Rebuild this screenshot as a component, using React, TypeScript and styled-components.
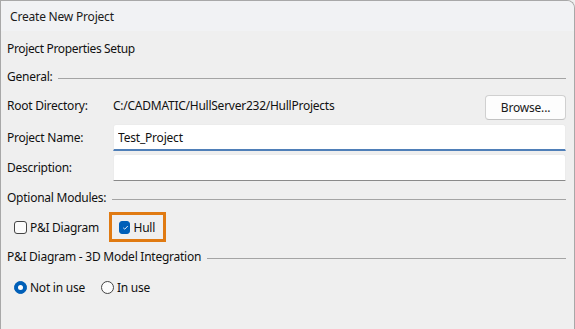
import { FunctionComponent } from "react";
import styled, { createGlobalStyle } from "styled-components";

const GlobalStyle = createGlobalStyle`
  html, body {
    margin: 0;
    padding: 0;
    background: #efefef;
  }
  body {
    font-family: "Noto Sans", "Segoe UI", sans-serif;
    font-size: 12px;
    color: #111;
  }
`;

const Window = styled.div`
  box-sizing: border-box;
  width: 575px;
  height: 329px;
  border: 1px solid #a8a8a8;
  border-bottom: none;
  border-top-right-radius: 8px;
  background: #efefef;
  overflow: hidden;
`;

const TitleBar = styled.div`
  height: 30px;
  display: flex;
  align-items: center;
  padding-left: 9px;
  background: #f1f2f4;
  color: #1b1b1b;
  letter-spacing: -0.2px;
`;

const Body = styled.div`
  display: flex;
  flex-direction: column;
  padding: 0 8px 0 6px;
  letter-spacing: -0.25px;
`;

const Heading = styled.div`
  height: 16px;
  line-height: 16px;
  margin-top: 10px;
  letter-spacing: -0.35px;
`;

const Group = styled.div<{ $top: number }>`
  display: flex;
  align-items: center;
  height: 16px;
  margin-top: ${(p) => p.$top}px;
  gap: 6px;

  &::after {
    content: "";
    flex: 1;
    height: 0;
    margin-top: 5px;
    border-top: 1px solid #a4a4a4;
  }
`;

const FormRow = styled.div<{ $top: number; $lift?: number }>`
  display: grid;
  grid-template-columns: 106px 1fr auto;
  align-items: center;
  margin-top: ${(p) => p.$top}px;

  & > span {
    padding-bottom: ${(p) => p.$lift ?? 0}px;
  }
`;

const BrowseButton = styled.button`
  box-sizing: border-box;
  width: 81px;
  height: 25px;
  font: inherit;
  letter-spacing: -0.2px;
  color: #1a1a1a;
  background: #fdfdfd;
  border: 1px solid #d0d0d0;
  border-bottom-color: #c2c2c2;
  border-radius: 4px;
  padding: 0;
`;

const TextInput = styled.input<{ $focused?: boolean }>`
  box-sizing: border-box;
  grid-column: 2 / 4;
  height: 27px;
  width: 100%;
  font: inherit;
  letter-spacing: -0.2px;
  color: #111;
  background: #ffffff;
  border: 1px solid #ececec;
  border-bottom: ${(p) => (p.$focused ? "2px solid #4f7fb8" : "1px solid #8a8a8a")};
  border-radius: 3px 3px 0 0;
  padding: 0 4px;
  outline: none;
`;

const OptionRow = styled.div<{ $top: number }>`
  display: flex;
  align-items: center;
  margin-top: ${(p) => p.$top}px;
  padding-left: 7px;
`;

const Option = styled.label<{ $width: number }>`
  display: flex;
  align-items: center;
  gap: 3px;
  width: ${(p) => p.$width}px;
`;

const Highlight = styled.div`
  box-sizing: border-box;
  display: flex;
  align-items: center;
  height: 30px;
  padding: 0 8px 0 7px;
  margin-left: -1px;
  border: 3px solid #e07a12;
`;

const Box = styled.span<{ $checked?: boolean; $round?: boolean }>`
  box-sizing: border-box;
  position: relative;
  display: inline-block;
  width: 13px;
  height: 13px;
  border-radius: ${(p) => (p.$round ? "50%" : "3px")};
  border: 1px solid ${(p) => (p.$checked ? "#005fb8" : "#444")};
  background: ${(p) => (p.$checked ? "#005fb8" : "#fbfbfb")};
`;

const Dot = styled.span`
  position: absolute;
  left: 3px;
  top: 3px;
  width: 5px;
  height: 5px;
  border-radius: 50%;
  background: #fff;
`;

const Check = () => (
  <svg width="11" height="11" viewBox="0 0 11 11" style={{ position: "absolute", left: 0, top: 0 }}>
    <path d="M3.2 5.8 L4.8 7.2 L7.8 4" fill="none" stroke="#dfe9f7" strokeWidth="1" />
  </svg>
);

const CreateProjectDialog: FunctionComponent = () => {
  return (
    <Window>
      <TitleBar>Create New Project</TitleBar>
      <Body>
        <Heading>Project Properties Setup</Heading>
        <Group $top={11}>General:</Group>
        <FormRow $top={11} $lift={5}>
          <span>Root Directory:</span>
          <span>C:/CADMATIC/HullServer232/HullProjects</span>
          <BrowseButton>Browse...</BrowseButton>
        </FormRow>
        <FormRow $top={4}>
          <span>Project Name:</span>
          <TextInput $focused defaultValue="Test_Project" />
        </FormRow>
        <FormRow $top={3}>
          <span>Description:</span>
          <TextInput defaultValue="" />
        </FormRow>
        <Group $top={8}>Optional Modules:</Group>
        <OptionRow $top={7}>
          <Option $width={96}>
            <Box />
            P&amp;I Diagram
          </Option>
          <Highlight>
            <Option $width={36}>
              <Box $checked>
                <Check />
              </Box>
              Hull
            </Option>
          </Highlight>
        </OptionRow>
        <Group $top={6}>P&amp;I Diagram - 3D Model Integration</Group>
        <OptionRow $top={15}>
          <Option $width={87}>
            <Box $checked $round>
              <Dot />
            </Box>
            Not in use
          </Option>
          <Option $width={60}>
            <Box $round />
            In use
          </Option>
        </OptionRow>
      </Body>
    </Window>
  );
};

const App: FunctionComponent = () => (
  <>
    <GlobalStyle />
    <CreateProjectDialog />
  </>
);

export default App;
